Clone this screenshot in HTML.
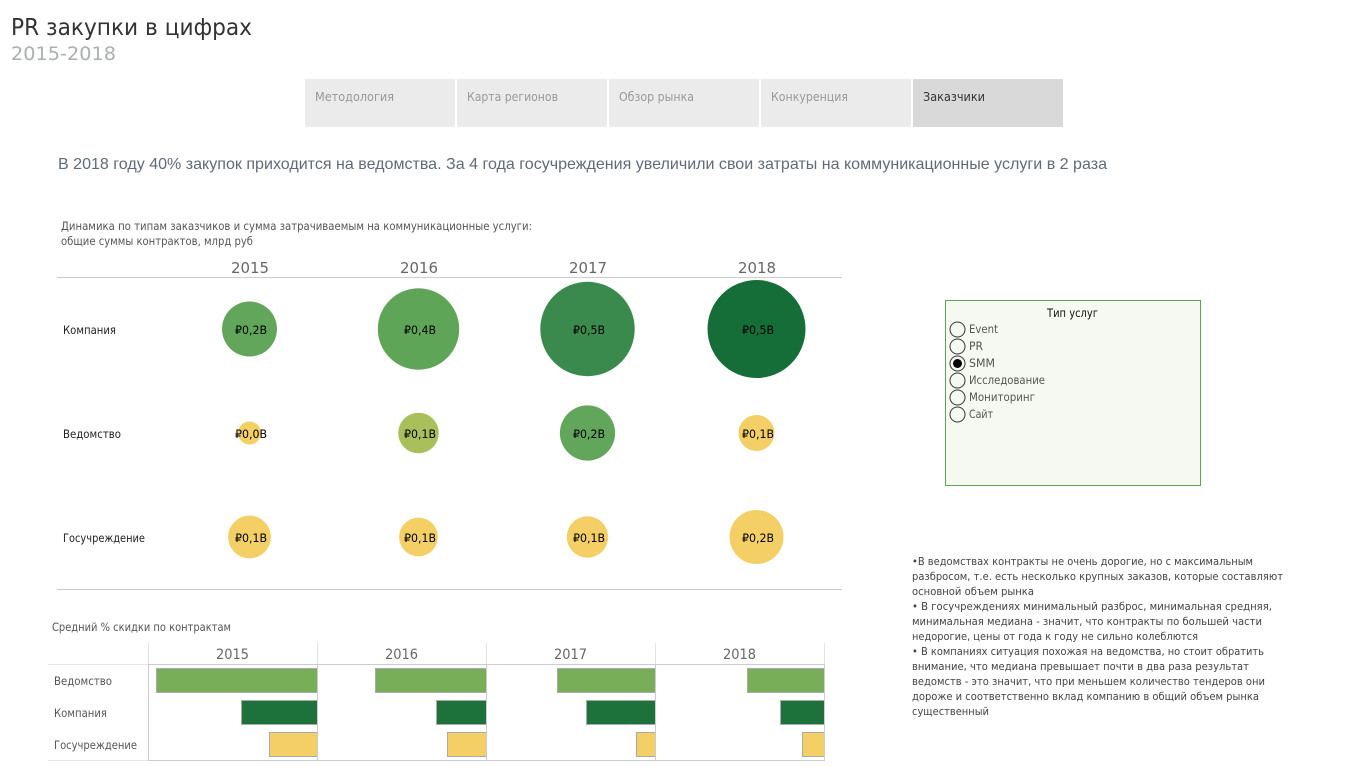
<!DOCTYPE html>
<html lang="ru">
<head>
<meta charset="utf-8">
<title>PR закупки в цифрах</title>
<style>
html,body{margin:0;padding:0;background:#fff;width:1365px;height:767px;overflow:hidden}
svg{display:block}
text{font-family:"DejaVu Sans","Liberation Sans",sans-serif;font-size:11.5px}
.y{font-size:15px;fill:#666}
.v{font-size:11.5px;fill:#000}
.r{fill:#222}
.n{fill:#444;font-size:11px}
.s{fill:#555}
.t{font-size:12px;fill:#999}
.bar{stroke:#aaa;stroke-width:1}
</style>
</head>
<body>
<svg width="1365" height="767" viewBox="0 0 1365 767" xmlns="http://www.w3.org/2000/svg">
<rect width="1365" height="767" fill="#fff"/>

<text x="11" y="35" textLength="241" lengthAdjust="spacingAndGlyphs" style="font-size:23.5px;fill:#333">PR закупки в цифрах</text>
<text x="11" y="60" textLength="105" lengthAdjust="spacingAndGlyphs" style="font-size:19px;fill:#aab0ae">2015-2018</text>

<rect x="305" y="79" width="150" height="48" fill="#ebebeb"/>
<rect x="457" y="79" width="150" height="48" fill="#ebebeb"/>
<rect x="609" y="79" width="150" height="48" fill="#ebebeb"/>
<rect x="761" y="79" width="150" height="48" fill="#ebebeb"/>
<rect x="913" y="79" width="150" height="48" fill="#d9d9d9"/>
<text class="t" x="315" y="101" textLength="79" lengthAdjust="spacingAndGlyphs">Методология</text>
<text class="t" x="467" y="101" textLength="91" lengthAdjust="spacingAndGlyphs">Карта регионов</text>
<text class="t" x="619" y="101" textLength="75" lengthAdjust="spacingAndGlyphs">Обзор рынка</text>
<text class="t" x="771" y="101" textLength="77" lengthAdjust="spacingAndGlyphs">Конкуренция</text>
<text class="t" x="923" y="101" textLength="62" lengthAdjust="spacingAndGlyphs" style="fill:#333">Заказчики</text>

<text x="58" y="169" textLength="1049" lengthAdjust="spacingAndGlyphs" style='font-family:"Liberation Sans",sans-serif;font-size:16px;fill:#5f6b78'>В 2018 году 40% закупок приходится на ведомства. За 4 года госучреждения увеличили свои затраты на коммуникационные услуги в 2 раза</text>

<text class="s" x="61" y="230" textLength="471" lengthAdjust="spacingAndGlyphs">Динамика по типам заказчиков и сумма затрачиваемым на коммуникационные услуги:</text>
<text class="s" x="61" y="245" textLength="192" lengthAdjust="spacingAndGlyphs">общие суммы контрактов, млрд руб</text>

<text class="y" x="231" y="273" textLength="38" lengthAdjust="spacingAndGlyphs">2015</text>
<text class="y" x="400" y="273" textLength="38" lengthAdjust="spacingAndGlyphs">2016</text>
<text class="y" x="569" y="273" textLength="38" lengthAdjust="spacingAndGlyphs">2017</text>
<text class="y" x="738" y="273" textLength="38" lengthAdjust="spacingAndGlyphs">2018</text>
<rect x="57" y="277" width="785" height="1" fill="#ccc"/>
<rect x="57" y="589" width="785" height="1" fill="#ccc"/>

<text class="r" x="63" y="334" textLength="53" lengthAdjust="spacingAndGlyphs">Компания</text>
<text class="r" x="63" y="438" textLength="58" lengthAdjust="spacingAndGlyphs">Ведомство</text>
<text class="r" x="63" y="542" textLength="82" lengthAdjust="spacingAndGlyphs">Госучреждение</text>

<circle cx="249.5" cy="329" r="27.5" fill="#61a65a"/>
<circle cx="418.5" cy="329" r="40.7" fill="#5fa558"/>
<circle cx="587.5" cy="329" r="47.2" fill="#3a8a4e"/>
<circle cx="756.5" cy="329" r="49" fill="#156d38"/>
<circle cx="249.5" cy="433" r="11.5" fill="#f3cf66"/>
<circle cx="418.5" cy="433" r="20.3" fill="#a9bf5b"/>
<circle cx="587.5" cy="433" r="27.6" fill="#61a65a"/>
<circle cx="756.5" cy="433" r="18" fill="#f3cf66"/>
<circle cx="249.5" cy="537" r="21.4" fill="#f3cf66"/>
<circle cx="418.5" cy="537" r="19.4" fill="#f3cf66"/>
<circle cx="587.5" cy="537" r="20.7" fill="#f3cf66"/>
<circle cx="756.5" cy="537" r="27" fill="#f3cf66"/>

<text class="v" x="235" y="334" textLength="32" lengthAdjust="spacingAndGlyphs">₽0,2B</text>
<text class="v" x="404" y="334" textLength="32" lengthAdjust="spacingAndGlyphs">₽0,4B</text>
<text class="v" x="573" y="334" textLength="32" lengthAdjust="spacingAndGlyphs">₽0,5B</text>
<text class="v" x="742" y="334" textLength="32" lengthAdjust="spacingAndGlyphs">₽0,5B</text>
<text class="v" x="235" y="438" textLength="32" lengthAdjust="spacingAndGlyphs">₽0,0B</text>
<text class="v" x="404" y="438" textLength="32" lengthAdjust="spacingAndGlyphs">₽0,1B</text>
<text class="v" x="573" y="438" textLength="32" lengthAdjust="spacingAndGlyphs">₽0,2B</text>
<text class="v" x="742" y="438" textLength="32" lengthAdjust="spacingAndGlyphs">₽0,1B</text>
<text class="v" x="235" y="542" textLength="32" lengthAdjust="spacingAndGlyphs">₽0,1B</text>
<text class="v" x="404" y="542" textLength="32" lengthAdjust="spacingAndGlyphs">₽0,1B</text>
<text class="v" x="573" y="542" textLength="32" lengthAdjust="spacingAndGlyphs">₽0,1B</text>
<text class="v" x="742" y="542" textLength="32" lengthAdjust="spacingAndGlyphs">₽0,2B</text>

<rect x="945.5" y="300.5" width="255" height="185" fill="#f6f9f1" stroke="#5ea552" stroke-width="1"/>
<text x="1047" y="317" textLength="51" lengthAdjust="spacingAndGlyphs" style="fill:#111">Тип услуг</text>
<g fill="#fff" fill-opacity="0" stroke="#333" stroke-width="1">
<circle cx="957.5" cy="329.5" r="7.5"/>
<circle cx="957.5" cy="346.5" r="7.5"/>
<circle cx="957.5" cy="363.5" r="7.5"/>
<circle cx="957.5" cy="380.5" r="7.5"/>
<circle cx="957.5" cy="397.5" r="7.5"/>
<circle cx="957.5" cy="414.5" r="7.5"/>
</g>
<circle cx="957.5" cy="363.5" r="4.5" fill="#000"/>
<text class="s" x="969" y="333" textLength="29" lengthAdjust="spacingAndGlyphs">Event</text>
<text class="s" x="969" y="350" textLength="14" lengthAdjust="spacingAndGlyphs">PR</text>
<text class="s" x="969" y="367" textLength="26" lengthAdjust="spacingAndGlyphs">SMM</text>
<text class="s" x="969" y="384" textLength="76" lengthAdjust="spacingAndGlyphs">Исследование</text>
<text class="s" x="969" y="401" textLength="66" lengthAdjust="spacingAndGlyphs">Мониторинг</text>
<text class="s" x="969" y="418" textLength="24" lengthAdjust="spacingAndGlyphs">Сайт</text>

<text class="n" x="912" y="565" textLength="341" lengthAdjust="spacingAndGlyphs">•В ведомствах контракты не очень дорогие, но с максимальным</text>
<text class="n" x="912" y="580" textLength="371" lengthAdjust="spacingAndGlyphs">разбросом, т.е. есть несколько крупных заказов, которые составляют</text>
<text class="n" x="912" y="595" textLength="122" lengthAdjust="spacingAndGlyphs">основной объем рынка</text>
<text class="n" x="912" y="610" textLength="360" lengthAdjust="spacingAndGlyphs">• В госучреждениях минимальный разброс, минимальная средняя,</text>
<text class="n" x="912" y="625" textLength="350" lengthAdjust="spacingAndGlyphs">минимальная медиана - значит, что контракты по большей части</text>
<text class="n" x="912" y="640" textLength="286" lengthAdjust="spacingAndGlyphs">недорогие, цены от года к году не сильно колеблются</text>
<text class="n" x="912" y="655" textLength="352" lengthAdjust="spacingAndGlyphs">• В компаниях ситуация похожая на ведомства, но стоит обратить</text>
<text class="n" x="912" y="670" textLength="337" lengthAdjust="spacingAndGlyphs">внимание, что медиана превышает почти в два раза результат</text>
<text class="n" x="912" y="685" textLength="353" lengthAdjust="spacingAndGlyphs">ведомств - это значит, что при меньшем количество тендеров они</text>
<text class="n" x="912" y="700" textLength="347" lengthAdjust="spacingAndGlyphs">дороже и соответственно вклад компанию в общий объем рынка</text>
<text class="n" x="912" y="715" textLength="77" lengthAdjust="spacingAndGlyphs">существенный</text>

<text class="s" x="52" y="631" textLength="179" lengthAdjust="spacingAndGlyphs">Средний % скидки по контрактам</text>
<text class="y" x="216" y="659" textLength="33" lengthAdjust="spacingAndGlyphs" style="font-size:14px">2015</text>
<text class="y" x="385" y="659" textLength="33" lengthAdjust="spacingAndGlyphs" style="font-size:14px">2016</text>
<text class="y" x="554" y="659" textLength="33" lengthAdjust="spacingAndGlyphs" style="font-size:14px">2017</text>
<text class="y" x="723" y="659" textLength="33" lengthAdjust="spacingAndGlyphs" style="font-size:14px">2018</text>

<text class="s" x="54" y="685" textLength="58" lengthAdjust="spacingAndGlyphs">Ведомство</text>
<text class="s" x="54" y="717" textLength="53" lengthAdjust="spacingAndGlyphs">Компания</text>
<text class="s" x="54" y="749" textLength="83" lengthAdjust="spacingAndGlyphs">Госучреждение</text>

<rect class="bar" x="156.5" y="668.5" width="161" height="24" fill="#79ae58"/>
<rect class="bar" x="241.5" y="700.5" width="76" height="24" fill="#1d723b"/>
<rect class="bar" x="269.5" y="732.5" width="48" height="24" fill="#f3cf66"/>
<rect class="bar" x="375.5" y="668.5" width="111" height="24" fill="#79ae58"/>
<rect class="bar" x="436.5" y="700.5" width="50" height="24" fill="#1d723b"/>
<rect class="bar" x="447.5" y="732.5" width="39" height="24" fill="#f3cf66"/>
<rect class="bar" x="557.5" y="668.5" width="98" height="24" fill="#79ae58"/>
<rect class="bar" x="586.5" y="700.5" width="69" height="24" fill="#1d723b"/>
<rect class="bar" x="636.5" y="732.5" width="19" height="24" fill="#f3cf66"/>
<rect class="bar" x="747.5" y="668.5" width="77" height="24" fill="#79ae58"/>
<rect class="bar" x="780.5" y="700.5" width="44" height="24" fill="#1d723b"/>
<rect class="bar" x="802.5" y="732.5" width="22" height="24" fill="#f3cf66"/>

<rect x="148" y="643" width="1" height="21" fill="#e3e3e3"/>
<rect x="317" y="643" width="1" height="21" fill="#e3e3e3"/>
<rect x="486" y="643" width="1" height="21" fill="#e3e3e3"/>
<rect x="655" y="643" width="1" height="21" fill="#e3e3e3"/>
<rect x="824" y="643" width="1" height="21" fill="#e3e3e3"/>
<rect x="148" y="664" width="1" height="97" fill="#ccc"/>
<rect x="317" y="664" width="1" height="97" fill="#ccc"/>
<rect x="486" y="664" width="1" height="97" fill="#ccc"/>
<rect x="655" y="664" width="1" height="97" fill="#ccc"/>
<rect x="824" y="664" width="1" height="97" fill="#ccc"/>
<rect x="48" y="664" width="100" height="1" fill="#e6e6e6"/>
<rect x="148" y="664" width="677" height="1" fill="#ccc"/>
<rect x="48" y="760" width="100" height="1" fill="#e6e6e6"/>
<rect x="148" y="760" width="677" height="1" fill="#ccc"/>
</svg>
</body>
</html>
